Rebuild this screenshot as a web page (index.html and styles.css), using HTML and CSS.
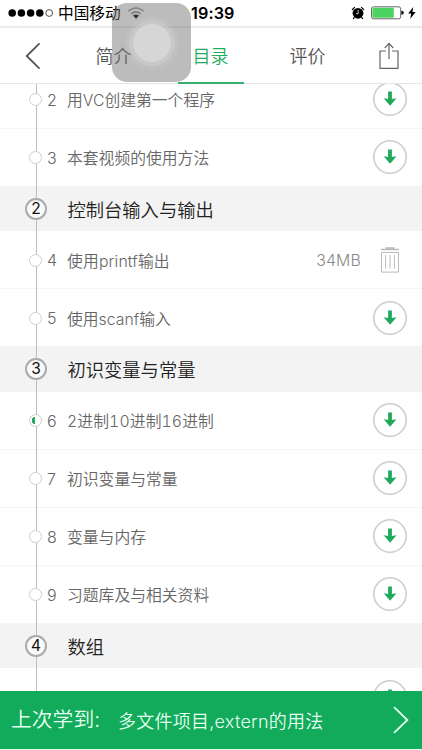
FILE: index.html
```html
<!DOCTYPE html>
<html lang="zh-CN">
<head>
<meta charset="utf-8">
<title>目录</title>
<link rel="stylesheet" href="styles.css">
</head>
<body>
<svg class="defs" width="0" height="0">
  <symbol id="download" viewBox="0 0 36 36">
    <circle cx="18" cy="18" r="16.2" fill="#fff" stroke="#cecece" stroke-width="1.6"/>
    <path d="M16.1 10.5h3.8v7.6l4.6-.8-6.4 7.4-6.4-7.4 4.4.8z" fill="#1fa95b"/>
  </symbol>
</svg>
<div class="screen">
  <div class="status">
    <svg class="signal" width="46" height="10" viewBox="0 0 46 10"><g fill="#000"><circle cx="4.2" cy="5" r="3.8"/><circle cx="13.4" cy="5" r="3.8"/><circle cx="22.6" cy="5" r="3.8"/><circle cx="31.8" cy="5" r="3.8"/></g><circle cx="41.2" cy="5" r="3.4" fill="none" stroke="#222" stroke-width=".8"/></svg>
    <span class="carrier">中国移动</span>
    <svg class="wifi" width="18" height="14" viewBox="0 0 18 14" fill="none" stroke-width="1.6"><path d="M1.5 5.2Q9-1.5 16.5 5.2" stroke="#999"/><path d="M4.2 8Q9 3.8 13.8 8" stroke="#888"/><path d="M6 9.6Q9 7.2 12 9.6L9 12.8z" fill="#000"/></svg>
    <span class="clock">19:39</span>
    <svg class="alarm" width="14" height="14" viewBox="0 0 14 14"><circle cx="7" cy="7.3" r="5.4"/><path d="M1 4 3.8 1.2M10.2 1.2 13 4M3.5 11 2.2 13M10.5 11l1.3 2" stroke="#000" stroke-width="1.2"/><path d="M7.2 4.2v3.5H5" fill="none" stroke="#ddd" stroke-width=".9"/></svg>
    <svg class="battery" width="33" height="14" viewBox="0 0 33 14"><rect x=".5" y=".8" width="29.2" height="12" rx="2" fill="#fff" stroke="#555" stroke-width=".9"/><rect x="1.4" y="1.8" width="21.4" height="10" rx="1" fill="#4cd463"/><path d="M30.4 4.8q2.4.2 2.4 2t-2.4 2z"/></svg>
    <svg class="bolt" width="8" height="12" viewBox="0 0 8 12"><path d="M5.2 0 .2 6.6h3L2.2 12l5.4-7H4.5z"/></svg>
  </div>
  <nav class="nav">
    <svg class="back" width="16" height="28" viewBox="0 0 16 28"><path d="M14.5 1.4 1.7 14 14.5 26.6" fill="none" stroke="#555" stroke-width="1.8"/></svg>
    <span class="tab intro">简介</span>
    <span class="tab active">目录</span>
    <span class="tab review">评价</span>
    <svg class="share" width="20" height="28" viewBox="0 0 20 28" fill="none" stroke="#666" stroke-width="1.2"><path d="M7 9H1v17.4h18V9h-6M10 17V1.5M5.8 6 10 1.3 14.2 6"/></svg>
  </nav>
  <main class="list">
    <div class="track">
      <div class="row"><i class="dot"></i><span class="num">2</span><span class="title">用VC创建第一个程序</span><svg class="dl"><use href="#download"/></svg></div>
      <div class="row"><i class="dot"></i><span class="num">3</span><span class="title">本套视频的使用方法</span><svg class="dl"><use href="#download"/></svg></div>
      <div class="chapter"><b class="badge">2</b><span>控制台输入与输出</span></div>
      <div class="row"><i class="dot"></i><span class="num">4</span><span class="title printf">使用printf输出</span><span class="size">34MB</span><svg class="trash" width="20" height="28" viewBox="0 0 20 28" fill="none" stroke="#bbb"><path d="M1 3.5h18M5.5 2.2h9" stroke-width="1.7"/><path d="M1.5 6.5h17v19.6h-17zM5.6 9v13.5M10 9v13.5M14.4 9v13.5"/></svg></div>
      <div class="row"><i class="dot"></i><span class="num">5</span><span class="title">使用scanf输入</span><svg class="dl"><use href="#download"/></svg></div>
      <div class="chapter"><b class="badge">3</b><span>初识变量与常量</span></div>
      <div class="row"><i class="dot half"></i><span class="num">6</span><span class="title wide">2进制10进制16进制</span><svg class="dl"><use href="#download"/></svg></div>
      <div class="row"><i class="dot"></i><span class="num">7</span><span class="title">初识变量与常量</span><svg class="dl"><use href="#download"/></svg></div>
      <div class="row"><i class="dot"></i><span class="num">8</span><span class="title">变量与内存</span><svg class="dl"><use href="#download"/></svg></div>
      <div class="row"><i class="dot"></i><span class="num">9</span><span class="title">习题库及与相关资料</span><svg class="dl"><use href="#download"/></svg></div>
      <div class="chapter"><b class="badge">4</b><span>数组</span></div>
      <div class="row"><svg class="dl"><use href="#download"/></svg></div>
    </div>
  </main>
  <footer class="resume">
    <span class="label">上次学到:</span>
    <span class="lesson">多文件项目,extern的用法</span>
    <svg class="next" width="18" height="28" viewBox="0 0 18 28"><path d="M2 1.2 15.4 14 2 26.8" fill="none" stroke="#e4fff0" stroke-width="1.8"/></svg>
  </footer>
  <div class="assist"><i></i></div>
</div>
</body>
</html>
```
FILE: styles.css
```css
* { box-sizing: border-box; }
body {
  margin: 0;
  background: #fff;
  font-family: Inter, "Noto Sans CJK SC", sans-serif;
  font-weight: 350;
}
.defs { display: block; position: absolute; }
.screen {
  position: relative;
  width: 422px;
  height: 750px;
  overflow: hidden;
  display: flex;
  flex-direction: column;
  border-bottom: 1px solid #e8f6ee;
}
svg { flex: none; }
span { white-space: nowrap; }
.status {
  flex: none;
  height: 28px;
  display: flex;
  align-items: center;
  padding-left: 8px;
  border-bottom: 2px solid #ebebeb;
  color: #000;
}
.carrier { width: 63px; margin-left: 4px; padding-top: 2px; font-size: 15.7px; font-weight: 400; line-height: 26px; }
.wifi { margin-left: 6px; }
.clock { margin-left: 46px; width: 46px; font-size: 16.2px; font-weight: 600; letter-spacing: .1px; }
.alarm { margin-left: 114px; }
.battery { margin-left: 6px; }
.bolt { margin-left: 4px; }
.nav {
  flex: none;
  height: 56px;
  display: grid;
  grid-template-columns: 65px 97px 97px 97px 65px;
  align-items: center;
  border-bottom: 1px solid #e6e6e6;
}
.nav > * { justify-self: center; }
.share { margin-bottom: 1px; }
.tab { font-size: 18px; line-height: 55px; color: #555; }
.nav .tab.active {
  width: 66px;
  height: 56px;
  text-align: center;
  line-height: 57px;
  color: #1fae61;
  border-bottom: 2px solid #35ae70;
}
.list { flex: 1; min-height: 0; overflow: hidden; }
.track {
  margin-top: -13.5px;
  background: linear-gradient(#bdbdbd, #bdbdbd) 36px 0 / 1px 100% no-repeat;
}
.row {
  height: 58px;
  display: flex;
  align-items: center;
  padding: 0 14px 0 29px;
  color: #666;
  background: linear-gradient(#bdbdbd, #bdbdbd) 36px 0 / 1px 100% no-repeat, linear-gradient(#f5f5f5, #f5f5f5) 0 100% / 100% 1px no-repeat;
}
.dot { flex: none; width: 13px; height: 13px; border: 1.5px solid #cfcfcf; border-radius: 50%; background: #fff; }
.half { background: radial-gradient(circle, transparent 3.5px, #fff 4px), linear-gradient(90deg, #1fa95b 50%, #fff 50%); }
.num { width: 20px; margin-left: 5px; font-size: 16px; }
.title { font-size: 15.8px; }
.printf { letter-spacing: .15px; }
.wide { font-variant-numeric: tabular-nums; letter-spacing: .1px; }
.dl { width: 36px; height: 36px; margin: 0 0 1px auto; }
.size { margin-left: auto; font-size: 15.8px; letter-spacing: .2px; font-weight: 300; color: #888; }
.trash { margin: 0 8px 0 19px; }
.chapter {
  height: 44.5px;
  display: flex;
  align-items: center;
  padding-left: 25px;
  font-size: 18.3px;
  color: #222;
  background: linear-gradient(#bdbdbd, #bdbdbd) 36px 0 / 1px 100% no-repeat, #f3f3f3;
}
.badge {
  width: 22px;
  height: 22px;
  margin-right: 20.5px;
  border: 2px solid #aaa;
  border-radius: 50%;
  background: #fafafa;
  font-size: 15.5px;
  font-weight: 400;
  line-height: 18px;
  text-align: center;
  color: #111;
}
.resume {
  flex: none;
  height: 58px;
  display: flex;
  align-items: center;
  padding: 0 12px 0 11px;
  background: #12aa5b;
  color: #e4fff0;
}
.label { width: 107px; font-size: 20.8px; line-height: 30px; }
.lesson { font-size: 18px; letter-spacing: .25px; }
.next { margin-left: auto; }
.assist {
  position: absolute;
  left: 112px;
  top: 3px;
  width: 79px;
  height: 79px;
  border-radius: 15px;
  background: rgba(115, 115, 115, .48);
  display: grid;
  place-items: center;
}
.assist i {
  width: 38px;
  height: 38px;
  border-radius: 50%;
  background: #d6d6d6;
  box-shadow: 0 0 0 4px rgba(220, 220, 220, .3), 0 0 0 8px rgba(220, 220, 220, .12);
}
```
